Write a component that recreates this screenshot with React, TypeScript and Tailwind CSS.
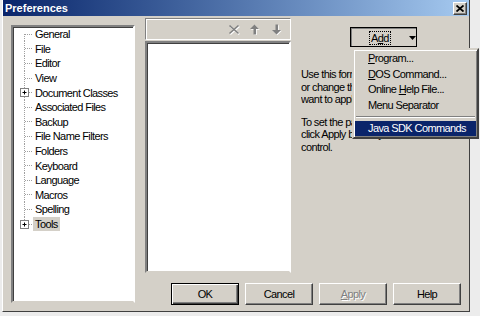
import React from 'react';

const treeItems = [
  { label: 'General' },
  { label: 'File' },
  { label: 'Editor' },
  { label: 'View' },
  { label: 'Document Classes', plus: true },
  { label: 'Associated Files' },
  { label: 'Backup' },
  { label: 'File Name Filters' },
  { label: 'Folders' },
  { label: 'Keyboard' },
  { label: 'Language' },
  { label: 'Macros' },
  { label: 'Spelling' },
  { label: 'Tools', plus: true, selected: true },
];

// dotted tree connector drawn per row
const Connector = ({ first, last, plus }: { first?: boolean; last?: boolean; plus?: boolean }) => (
  <svg width="20" height="15" viewBox="0 0 20 15" className="shrink-0">
    <line x1="11.5" y1={first ? 7 : 0} x2="11.5" y2={last ? 7 : 15} stroke="#a0a0a0" strokeDasharray="1 1" />
    <line x1="12" y1="7.5" x2="20" y2="7.5" stroke="#a0a0a0" strokeDasharray="1 1" />
    {plus && (
      <g>
        <rect x="7.5" y="3.5" width="8" height="8" fill="#ffffff" stroke="#808080" />
        <line x1="9.5" y1="7.5" x2="13.5" y2="7.5" stroke="#000" />
        <line x1="11.5" y1="5.5" x2="11.5" y2="9.5" stroke="#000" />
      </g>
    )}
  </svg>
);

const XIcon = () => (
  <svg width="12" height="11" viewBox="0 0 12 11">
    <path d="M1.5 1.5 L10.5 9.5 M10.5 1.5 L1.5 9.5" stroke="#ffffff" strokeWidth="1.6" transform="translate(0.8 0.8)" />
    <path d="M1.5 1.5 L10.5 9.5 M10.5 1.5 L1.5 9.5" stroke="#808080" strokeWidth="1.6" />
  </svg>
);

const UpIcon = () => (
  <svg width="11" height="11" viewBox="0 0 11 11">
    <path d="M5.5 0.5 L10 5 L7 5 L7 10.5 L4.5 10.5 L4.5 5 L1 5 Z" fill="#ffffff" transform="translate(0.8 0.8)" />
    <path d="M5.5 0.5 L10 5 L7 5 L7 10.5 L4.5 10.5 L4.5 5 L1 5 Z" fill="#808080" />
  </svg>
);

const DownIcon = () => (
  <svg width="11" height="11" viewBox="0 0 11 11">
    <path d="M5.5 10.5 L10 6 L7 6 L7 0.5 L4.5 0.5 L4.5 6 L1 6 Z" fill="#ffffff" transform="translate(0.8 0.8)" />
    <path d="M5.5 10.5 L10 6 L7 6 L7 0.5 L4.5 0.5 L4.5 6 L1 6 Z" fill="#808080" />
  </svg>
);

const raised =
  'border border-t-white border-l-white border-r-[#404040] border-b-[#404040] shadow-[inset_-1px_-1px_0_#808080]';

const Button = ({ children, isDefault, disabled }: { children: React.ReactNode; isDefault?: boolean; disabled?: boolean }) => (
  <div
    className={`w-[68px] h-[22px] flex items-center justify-center bg-[#d4d0c8] ${
      isDefault
        ? 'border border-black shadow-[inset_1px_1px_0_#ffffff,inset_-1px_-1px_0_#404040,inset_-2px_-2px_0_#808080]'
        : raised
    } ${disabled ? 'text-[#808080] [text-shadow:1px_1px_0_#ffffff]' : 'text-black'}`}
  >
    {children}
  </div>
);

export default function App() {
  return (
    <div className="relative w-[480px] h-[316px] overflow-hidden bg-[#ececec] text-[11px] leading-[13px] tracking-[-0.6px] text-black font-['Liberation_Sans',Arial,sans-serif]">
      <div className="ml-[2px] w-[468px] h-[312px] flex flex-col bg-[#d4d0c8] border-l border-l-white border-r border-r-[#404040] border-b border-b-[#404040]">
        {/* title bar */}
        <div className="h-[16px] flex items-center justify-between bg-gradient-to-r from-[#0a246a] to-[#a6caf0]">
          <span className="pl-[2px] text-white font-bold tracking-normal">Preferences</span>
          <div className={`mr-[2px] w-[14px] h-[13px] flex items-center justify-center bg-[#d4d0c8] ${raised}`}>
            <svg width="8" height="7" viewBox="0 0 8 7">
              <path d="M0.5 0.5 L7.5 6.5 M7.5 0.5 L0.5 6.5" stroke="#000" strokeWidth="1.8" />
            </svg>
          </div>
        </div>

        <div className="flex flex-1">
          {/* tree */}
          <div className="ml-[8px] mt-[9px] w-[124px] h-[278px] bg-white border-2 border-t-[#808080] border-l-[#808080] border-r-white border-b-[#d4d0c8] shadow-[inset_1px_1px_0_#404040] overflow-hidden">
            <div className="flex flex-col">
              {treeItems.map((it, i) => (
                <div key={it.label} className="h-[14.6px] flex items-center whitespace-nowrap">
                  <Connector first={i === 0} last={i === treeItems.length - 1} plus={it.plus} />
                  <span className={`px-[2px] leading-[14px] ${it.selected ? 'bg-[#d4d0c8]' : ''}`}>{it.label}</span>
                </div>
              ))}
            </div>
          </div>

          <div className="ml-[10px] mt-[2px] flex flex-col">
            <div className="flex">
              {/* tool list */}
              <div className="w-[146px] h-[255px] flex flex-col">
                <div className="h-[22px] flex items-center justify-end pr-[8px] border-t border-l border-t-[#808080] border-l-[#808080] border-r border-r-white border-b border-b-white shadow-[inset_1px_1px_0_#ffffff]">
                  <XIcon />
                  <span className="ml-[9px]"><UpIcon /></span>
                  <span className="ml-[11px]"><DownIcon /></span>
                </div>
                <div className="flex-1 mt-[1px] bg-white border-2 border-t-[#808080] border-l-[#808080] border-r-white border-b-[#d4d0c8] shadow-[inset_1px_1px_0_#404040]" />
              </div>

              {/* right text */}
              <div className="ml-[10px] w-[164px] flex flex-col">
                <div className="ml-[49px] mt-[9px] w-[67px] h-[20px] flex items-center bg-[#d4d0c8] border border-black shadow-[inset_1px_1px_0_#808080]">
                  <span className="ml-[18px] px-[1px] border border-dotted border-black leading-[12px] mt-[1px]">
                    A<span className="underline">d</span>d
                  </span>
                  <svg width="7" height="4" viewBox="0 0 7 4" className="ml-[18px] mt-[1px]">
                    <path d="M0 0 L7 0 L3.5 4 Z" fill="#000" />
                  </svg>
                </div>
                <div className="mt-[21px] leading-[12.5px] whitespace-nowrap overflow-hidden">
                  <p>Use this form to add new tools</p>
                  <p>or change the tools that you</p>
                  <p>want to apply to a document.</p>
                  <p className="mt-[10px]">To set the parameters for a tool,</p>
                  <p>click Apply before you select another</p>
                  <p>control.</p>
                </div>
              </div>
            </div>

            {/* bottom buttons */}
            <div className="mt-[10px] ml-[26px] flex gap-[6px]">
              <Button isDefault>OK</Button>
              <Button>Cancel</Button>
              <Button disabled>
                <span className="underline">A</span>pply
              </Button>
              <Button>Help</Button>
            </div>
          </div>
        </div>
      </div>

      {/* Add dropdown menu */}
      <div className="absolute left-[352px] top-[48px] w-[127px] h-[91px] p-[1px] whitespace-nowrap bg-[#d4d0c8] border-2 border-t-[#d4d0c8] border-l-[#d4d0c8] border-r-[#404040] border-b-[#404040] shadow-[inset_1px_1px_0_#ffffff,inset_-1px_-1px_0_#808080]">
        <div className="h-[15.5px] flex items-center pl-[13px]"><span><span className="underline">P</span>rogram...</span></div>
        <div className="h-[15.5px] flex items-center pl-[13px]"><span><span className="underline">D</span>OS Command...</span></div>
        <div className="h-[15.5px] flex items-center pl-[13px]"><span>Online <span className="underline">H</span>elp File...</span></div>
        <div className="h-[15.5px] flex items-center pl-[13px]">Menu Separator</div>
        <div className="h-[8px] flex items-center px-[1px]">
          <div className="w-full h-[2px] border-t border-t-[#808080] border-b border-b-white" />
        </div>
        <div className="h-[15px] flex items-center pl-[13px] bg-[#0a246a] text-white">Java SDK Commands</div>
      </div>
    </div>
  );
}
